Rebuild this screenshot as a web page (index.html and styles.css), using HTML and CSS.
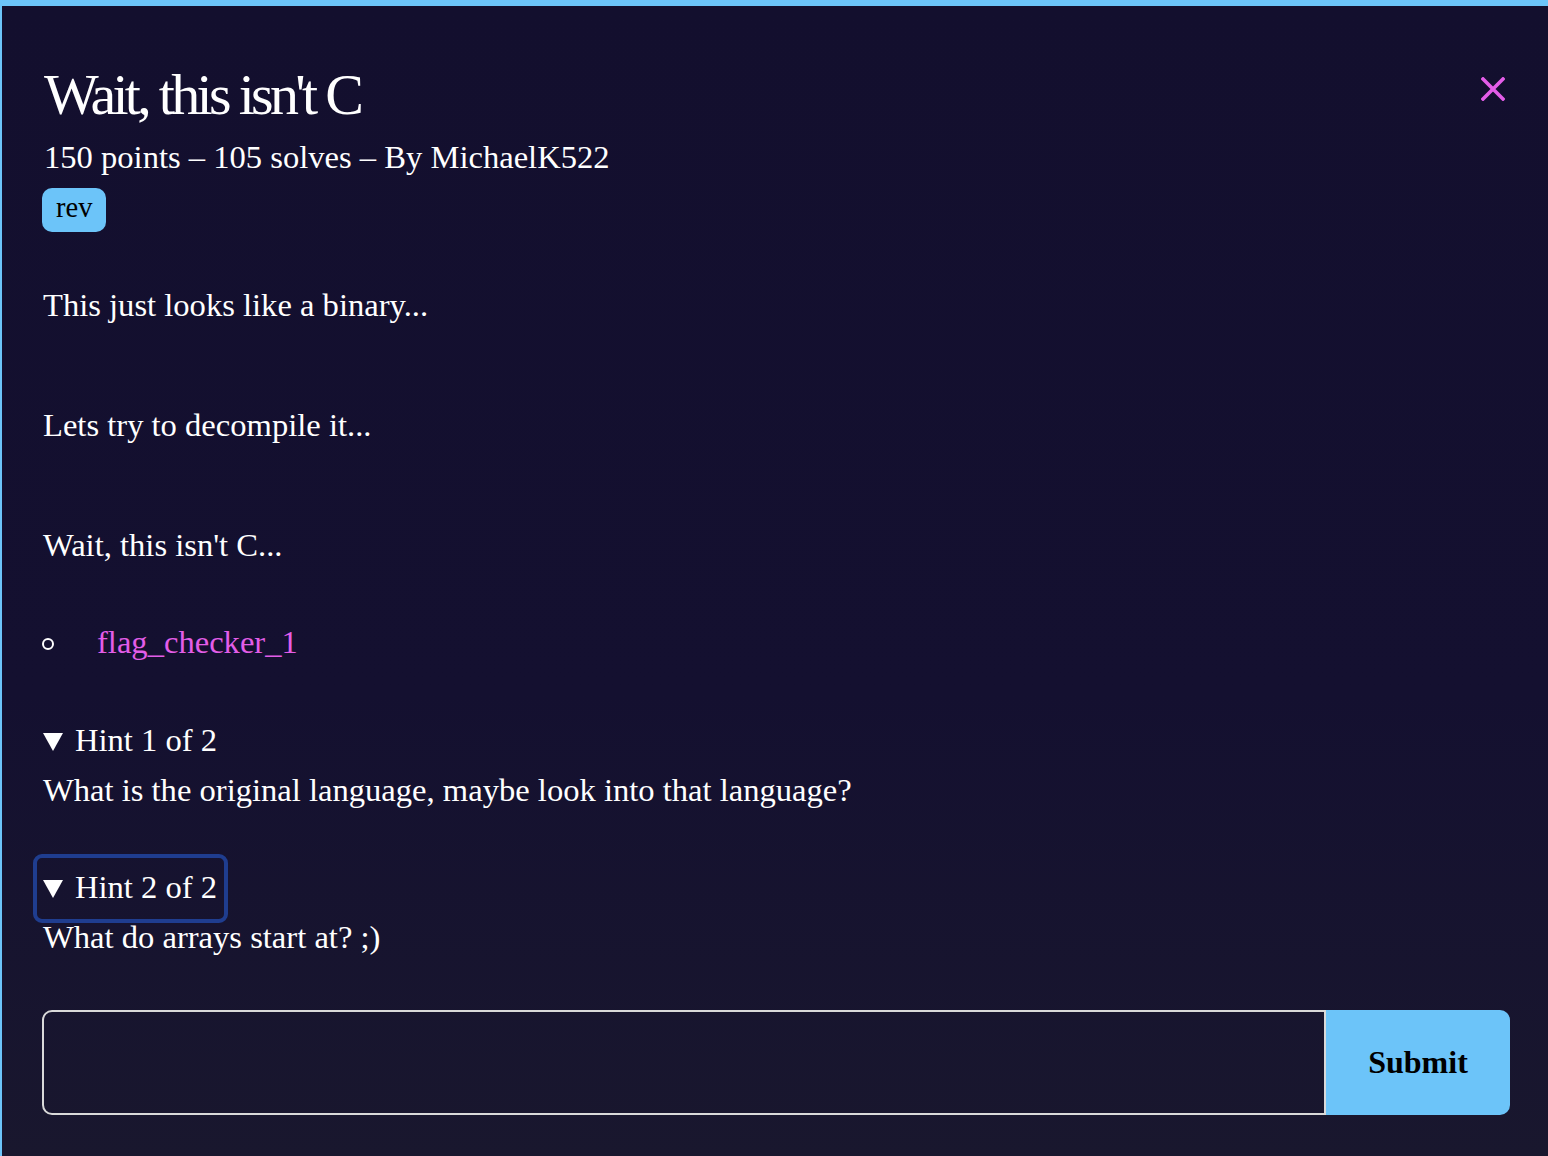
FILE: index.html
```
<!DOCTYPE html>
<html lang="en">
<head>
<meta charset="utf-8">
<title>Wait, this isn't C</title>
<link rel="stylesheet" href="styles.css">
</head>
<body>
<div class="modal">
  <div class="header">
    <h1 class="title">Wait, this isn't C</h1>
    <button class="close" aria-label="Close">
      <svg width="24" height="24" viewBox="0 0 24 24"><path d="M2 2 L22 22 M22 2 L2 22" stroke="#e35de8" stroke-width="3.6" stroke-linecap="square" fill="none"/></svg>
    </button>
  </div>
  <div class="meta">150 points – 105 solves – By MichaelK522</div>
  <div class="tags"><span class="tag">rev</span></div>
  <div class="desc">
    <p class="p1">This just looks like a binary...</p>
    <p class="pn">Lets try to decompile it...</p>
    <p class="pn">Wait, this isn't C...</p>
  </div>
  <ul class="files">
    <li><span class="bullet"></span><a class="link" href="#">flag_checker_1</a></li>
  </ul>
  <details class="hint h1" open>
    <summary class="summary"><span class="tri"></span>Hint 1 of 2</summary>
    <div class="hint-body">What is the original language, maybe look into that language?</div>
  </details>
  <details class="hint h2" open>
    <summary class="summary focused"><span class="tri"></span>Hint 2 of 2</summary>
    <div class="hint-body">What do arrays start at? ;)</div>
  </details>
  <form class="flag-form">
    <input class="flag-input" type="text" aria-label="Flag">
    <button class="submit" type="button">Submit</button>
  </form>
</div>
</body>
</html>
```

FILE: styles.css
```
html, body {
  margin: 0;
  padding: 0;
}
body {
  width: 1548px;
  height: 1156px;
  box-sizing: border-box;
  border-top: 6px solid #6cc4f9;
  border-left: 2px solid #6cc4f9;
  background: linear-gradient(180deg, #130f2e 0%, #141030 60%, #19172e 100%);
  color: #ffffff;
  font-family: "Liberation Serif", "Times New Roman", serif;
  font-size: 32.6px;
  line-height: 37px;
  overflow: hidden;
}
.modal {
  padding: 60px 38px 0 40px;
}
.header {
  display: flex;
  justify-content: space-between;
  align-items: flex-start;
}
.title {
  margin: 0 0 0 2px;
  font-weight: normal;
  font-size: 58px;
  line-height: 58px;
  letter-spacing: -3.7px;
}
.close {
  margin: 11px 5px 0 0;
  padding: 0;
  border: 0;
  background: none;
  width: 24px;
  height: 24px;
  display: block;
}
.close svg {
  display: block;
}
.meta {
  margin-top: 15px;
  margin-left: 2px;
}
.tags {
  margin-top: 12px;
  display: flex;
}
.tag {
  background: #6cc4f9;
  color: #000;
  font-size: 28.5px;
  line-height: 32px;
  padding: 4px 14px 8px 14px;
  border-radius: 10px;
}
.desc p {
  margin: 0 0 0 1px;
}
.desc .p1 {
  margin-top: 55px;
}
.desc .pn {
  margin-top: 83px;
}
.files {
  list-style: none;
  margin: 60px 0 0 0;
  padding: 0;
}
.files li {
  display: flex;
  align-items: center;
}
.bullet {
  width: 8px;
  height: 8px;
  border: 2px solid #fff;
  border-radius: 50%;
  margin-left: 0;
  margin-right: 43px;
  margin-top: 3px;
}
.link {
  color: #e35de8;
  text-decoration: none;
}
.hint {
  margin-top: 50px;
}
.h2 {
  margin-top: 49px;
}
.summary {
  display: inline-flex;
  align-items: center;
  list-style: none;
  padding: 11px 7px 13px 6px;
  margin-left: -5px;
  border-radius: 5px;
  cursor: pointer;
}
.summary::-webkit-details-marker {
  display: none;
}
.summary.focused {
  outline: 4px solid #1f3d8f;
}
.tri {
  width: 0;
  height: 0;
  border-left: 10px solid transparent;
  border-right: 10px solid transparent;
  border-top: 18px solid #fff;
  margin-right: 12px;
  margin-top: 2px;
}
.hint-body {
  margin-left: 1px;
}
.flag-form {
  display: flex;
  margin-top: 54px;
  margin-left: 0;
  height: 105px;
}
.flag-input {
  flex: 1;
  box-sizing: border-box;
  height: 105px;
  margin: 0;
  border: 2px solid #d9d9d9;
  border-radius: 10px 0 0 10px;
  background: transparent;
  color: #fff;
  font: inherit;
  padding: 0 16px;
  outline: none;
}
.submit {
  width: 184px;
  height: 105px;
  border: 0;
  margin: 0;
  border-radius: 0 10px 10px 0;
  background: #6cc4f9;
  color: #000;
  font-family: "Liberation Serif", "Times New Roman", serif;
  font-weight: bold;
  font-size: 32px;
  padding: 0;
}
```
